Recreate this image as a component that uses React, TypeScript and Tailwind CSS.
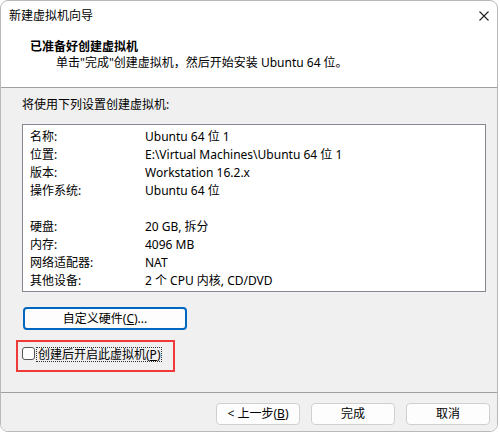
import type { ReactNode } from 'react';

// Summary dialog of the VMware "新建虚拟机向导" wizard (last step)

const rows: [string, string][] = [
  ['名称:', 'Ubuntu 64 位 1'],
  ['位置:', 'E:\\Virtual Machines\\Ubuntu 64 位 1'],
  ['版本:', 'Workstation 16.2.x'],
  ['操作系统:', 'Ubuntu 64 位'],
  ['', ''],
  ['硬盘:', '20 GB, 拆分'],
  ['内存:', '4096 MB'],
  ['网络适配器:', 'NAT'],
  ['其他设备:', '2 个 CPU 内核, CD/DVD'],
];

function Btn({ children }: { children: ReactNode }) {
  return (
    <button className="h-[22px] w-[84px] rounded-[4px] border border-[#d0d0d0] bg-[#fdfdfd] text-[12px] leading-[16px] text-black">
      {children}
    </button>
  );
}

export default function App() {
  return (
    <div
      className="w-[500px] h-[434px] bg-white"
      style={{ fontFamily: '"Noto Sans", "Noto Sans CJK SC", sans-serif' }}
    >
      <div className="w-[498px] h-[432px] flex flex-col overflow-hidden rounded-[8px] border border-[#b9b9b9] bg-white text-[12px] text-black">
        {/* title bar */}
        <div className="h-[29px] shrink-0 flex items-center pl-[8px] pr-[8px]">
          <span className="leading-[16px]">新建虚拟机向导</span>
          <svg className="ml-auto" width="10" height="10" viewBox="0 0 10 10" fill="none" stroke="#222" strokeWidth="1.1">
            <path d="M0.5 0.5 L9.5 9.5 M9.5 0.5 L0.5 9.5" />
          </svg>
        </div>

        {/* header */}
        <div className="h-[58px] shrink-0 border-b border-[#a0a0a0] pt-[9px] leading-[16px]">
          <div className="pl-[29px] font-bold">已准备好创建虚拟机</div>
          <div className="pl-[55px]">单击"完成"创建虚拟机，然后开始安装 Ubuntu 64 位。</div>
        </div>

        {/* body */}
        <div className="flex-1 flex flex-col bg-[#f0f0f0]">
          <div className="pl-[21px] pt-[8px] leading-[18px]">将使用下列设置创建虚拟机:</div>

          <div className="ml-[21px] mt-[10px] h-[168px] w-[464px] border border-[#828790] bg-white pl-[7px] pt-[3px]">
            {rows.map(([k, v], i) => (
              <div key={i} className="flex h-[18px] items-center">
                <span className="w-[115px]">{k}</span>
                <span>{v}</span>
              </div>
            ))}
          </div>

          <button className="ml-[22px] mt-[15px] h-[23px] w-[164px] rounded-[4px] border-2 border-[#0067c0] bg-[#fdfdfd] leading-[16px]">
            自定义硬件(<span className="underline">C</span>)...
          </button>

          <div className="ml-[15px] mt-[10px] h-[32px] w-[159px] border-2 border-[#f03a3a] flex items-start pl-[4px] pt-[5px]">
            <span className="w-[13px] h-[13px] shrink-0 rounded-[3px] border border-[#555] bg-white" />
            <span className="ml-[1px] h-[15px] flex items-center border border-dotted border-[#333] px-[1px] leading-[14px]">
              创建后开启此虚拟机(<span className="underline">P</span>)
            </span>
          </div>

          <div className="mt-[20px] border-t border-[#a0a0a0] flex justify-end gap-[11px] pt-[10px] pr-[7px]">
            <Btn>
              &lt; 上一步(<span className="underline">B</span>)
            </Btn>
            <Btn>完成</Btn>
            <Btn>取消</Btn>
          </div>
        </div>
      </div>
    </div>
  );
}
